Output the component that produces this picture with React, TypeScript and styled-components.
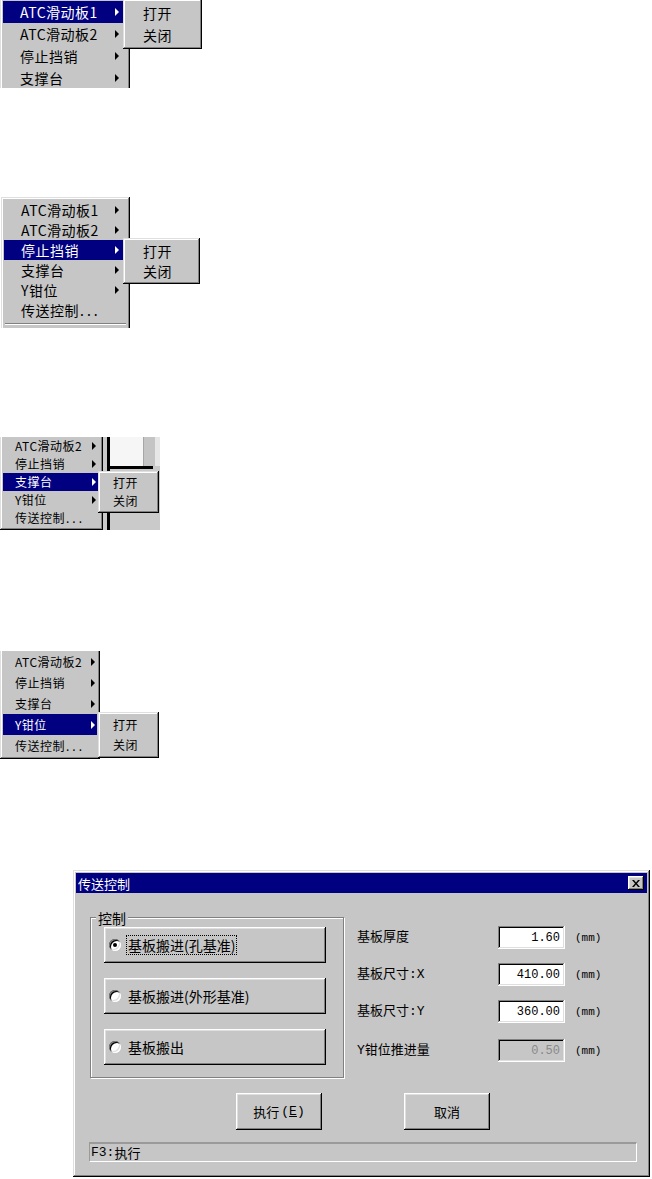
import React from 'react';
import styled, { createGlobalStyle, css } from 'styled-components';

const FACE = '#c6c6c6';
const NAVY = '#000080';

const GlobalStyle = createGlobalStyle`
  html, body {
    margin: 0;
    padding: 0;
    background: #fff;
  }
  body {
    font-family: "Noto Sans CJK SC", sans-serif;
    color: #000;
  }
  * {
    box-sizing: border-box;
  }
`;

const raised = css`
  box-shadow: inset -1px -1px #000, inset 1px 1px #dfdfdf, inset -2px -2px #808080,
    inset 2px 2px #fff;
`;

const buttonEdge = css`
  box-shadow: inset -1px -1px #000, inset 1px 1px #fff, inset -2px -2px #808080,
    inset 2px 2px #dfdfdf;
`;

const sunken = css`
  box-shadow: inset -1px -1px #fff, inset 1px 1px #808080, inset -2px -2px #dfdfdf,
    inset 2px 2px #000;
`;

type Look = { row: number; size: number; indent: number; arrowPad: number };
type Entry = { label: string; arrow?: boolean; dots?: boolean };

const MAIN_ENTRIES: Entry[] = [
  { label: 'ATC滑动板1', arrow: true },
  { label: 'ATC滑动板2', arrow: true },
  { label: '停止挡销', arrow: true },
  { label: '支撑台', arrow: true },
  { label: 'Y钳位', arrow: true },
  { label: '传送控制', dots: true },
];

const SUB_ENTRIES: Entry[] = [{ label: '打开' }, { label: '关闭' }];

const Page = styled.div`
  display: flex;
  flex-direction: column;
  min-height: 1179px;
`;

// a screenshot crop: anything past its edges is simply not shown
const Scene = styled.div<{ $top: number; $height: number }>`
  position: relative;
  display: flex;
  align-items: flex-start;
  margin-top: ${(p) => p.$top}px;
  height: ${(p) => p.$height}px;
  overflow: hidden;
`;

const MenuBox = styled.div<{ $width: number; $offset: number; $left: number; $padTop: number; $padBottom: number }>`
  flex: none;
  width: ${(p) => p.$width}px;
  margin-top: ${(p) => p.$offset}px;
  margin-left: ${(p) => p.$left}px;
  padding: ${(p) => p.$padTop}px 3px ${(p) => p.$padBottom}px;
  background: ${FACE};
  ${raised}
`;

const SubMenuBox = styled.div<{ $width: number; $x: number; $y: number }>`
  position: absolute;
  left: ${(p) => p.$x}px;
  top: ${(p) => p.$y}px;
  width: ${(p) => p.$width}px;
  padding: 3px;
  background: ${FACE};
  ${raised}
`;

const Item = styled.div<{ $look: Look; $active?: boolean }>`
  display: flex;
  align-items: center;
  height: ${(p) => p.$look.row}px;
  padding-left: ${(p) => p.$look.indent}px;
  padding-right: ${(p) => p.$look.arrowPad}px;
  font-size: ${(p) => p.$look.size}px;
  line-height: 1;
  white-space: nowrap;
  letter-spacing: 0.5px;
  color: ${(p) => (p.$active ? '#fff' : '#000')};
  background: ${(p) => (p.$active ? NAVY : 'transparent')};
`;

const Arrow = styled.span`
  flex: none;
  margin-left: auto;
  width: 0;
  height: 0;
  border-top: 4px solid transparent;
  border-bottom: 4px solid transparent;
  border-left: 4px solid currentColor;
`;

const Dots = styled.span`
  letter-spacing: 3px;
  margin-left: 1px;
`;

const Separator = styled.div`
  height: 2px;
  margin: 3px 1px;
  border-top: 1px solid #808080;
  border-bottom: 1px solid #fff;
`;

const Backdrop = styled.div`
  flex: none;
  width: 57px;
  height: 100%;
  display: flex;
  padding-left: 4px;
  background: #cacaca;
`;

const VRule = styled.div`
  flex: none;
  width: 3px;
  background: #000;
`;

const BackdropColumn = styled.div`
  flex: 1;
  display: flex;
  flex-direction: column;
`;

const BackdropTop = styled.div`
  display: flex;
  height: 29px;
  background: #e6e6e6;
`;

const WhitePane = styled.div`
  width: 33px;
  background: #f6f6f6;
`;

const GreyBar = styled.div`
  width: 12px;
  background: #c4c4c4;
  border-left: 1px solid #a6a6a6;
`;

const HRule = styled.div`
  width: 43px;
  height: 3px;
  background: #000;
`;

const Dialog = styled.div`
  display: flex;
  flex-direction: column;
  width: 577px;
  height: 307px;
  margin: 110px 0 0 73px;
  padding: 3px;
  background: ${FACE};
  ${raised}
`;

const TitleBar = styled.div`
  display: flex;
  align-items: center;
  justify-content: space-between;
  height: 20px;
  padding: 0 3px 0 2px;
  background: ${NAVY};
  color: #fff;
  font-size: 13px;
  line-height: 1;
`;

const CloseButton = styled.div`
  display: flex;
  align-items: center;
  justify-content: center;
  width: 16px;
  height: 14px;
  background: ${FACE};
  ${buttonEdge}
`;

const Body = styled.div`
  display: flex;
  flex-direction: column;
  flex: 1;
`;

const TopRow = styled.div`
  display: flex;
  align-items: flex-start;
  margin-top: 24px;
  padding-left: 14px;
`;

const GroupBox = styled.div`
  position: relative;
  display: flex;
  flex-direction: column;
  gap: 15px;
  width: 254px;
  height: 161px;
  padding: 9px 0 0 13px;
  border: 1px solid #808080;
  box-shadow: inset 1px 1px #fff, 1px 1px #fff;
`;

const Legend = styled.span`
  position: absolute;
  top: -8px;
  left: 5px;
  padding: 0 2px;
  background: ${FACE};
  font-size: 14px;
  line-height: 16px;
`;

const OptionButton = styled.div`
  display: flex;
  align-items: center;
  gap: 6px;
  width: 222px;
  height: 36px;
  padding-left: 5px;
  background: ${FACE};
  font-size: 14px;
  line-height: 1;
  ${buttonEdge}
`;

const RadioDot = styled.span<{ $on?: boolean }>`
  flex: none;
  display: flex;
  align-items: center;
  justify-content: center;
  width: 12px;
  height: 12px;
  border-radius: 50%;
  background: #fff;
  box-shadow: inset 1px 1px #808080, inset -1px -1px #fff, inset 2px 2px #000,
    inset -2px -2px #dfdfdf;

  &::after {
    content: '';
    display: ${(p) => (p.$on ? 'block' : 'none')};
    width: 4px;
    height: 4px;
    border-radius: 50%;
    background: #000;
  }
`;

const OptionLabel = styled.span<{ $focus?: boolean }>`
  padding: 2px 1px;
  outline: ${(p) => (p.$focus ? '1px dotted #000' : 'none')};
`;

const Fields = styled.div`
  display: flex;
  flex-direction: column;
  margin-left: 13px;
  padding-top: 9px;
`;

const FieldRow = styled.div<{ $gap: number }>`
  display: flex;
  align-items: center;
  height: 23px;
  margin-top: ${(p) => p.$gap}px;
`;

const FieldLabel = styled.span`
  width: 141px;
  font-family: "Liberation Mono", "Noto Sans CJK SC", monospace;
  font-size: 13px;
  line-height: 1;
`;

const ValueBox = styled.div<{ $disabled?: boolean }>`
  display: flex;
  align-items: center;
  justify-content: flex-end;
  width: 67px;
  height: 23px;
  padding-right: 5px;
  background: ${(p) => (p.$disabled ? FACE : '#fff')};
  color: ${(p) => (p.$disabled ? '#8a8a8a' : '#000')};
  font-family: "Liberation Mono", monospace;
  font-size: 12px;
  ${sunken}
`;

const Unit = styled.span`
  margin-left: 10px;
  font-family: "Liberation Mono", monospace;
  font-size: 11px;
`;

const ButtonRow = styled.div`
  display: flex;
  gap: 82px;
  margin-top: 15px;
  padding-left: 160px;
`;

const PushButton = styled.div`
  display: flex;
  align-items: center;
  justify-content: center;
  width: 86px;
  height: 37px;
  background: ${FACE};
  font-size: 13px;
  line-height: 1;
  ${buttonEdge}
`;

const Mnemonic = styled.span`
  margin-left: 2px;
  font-family: "Liberation Mono", monospace;

  u {
    text-decoration: underline;
  }
`;

const StatusBar = styled.div`
  display: flex;
  align-items: center;
  width: 548px;
  height: 20px;
  margin: 12px 0 0 13px;
  padding-left: 1px;
  border-top: 2px solid #9a9a9a;
  border-left: 1px solid #9a9a9a;
  border-right: 1px solid #fff;
  border-bottom: 1px solid #fff;
  font-size: 13px;
  line-height: 1;
`;

const StatusKey = styled.span`
  font-family: "Liberation Mono", monospace;
`;

const LARGE: Look = { row: 22, size: 14, indent: 17, arrowPad: 8 };
const MEDIUM: Look = { row: 20, size: 14, indent: 17, arrowPad: 8 };
const SMALL: Look = { row: 18, size: 12, indent: 12, arrowPad: 4 };
const TINY: Look = { row: 21, size: 12, indent: 12, arrowPad: 2 };

function Rows({ entries, active, look }: { entries: Entry[]; active?: number; look: Look }) {
  return (
    <>
      {entries.map((e, i) => (
        <Item key={e.label} $look={look} $active={i === active}>
          {e.label}
          {e.dots && <Dots>...</Dots>}
          {e.arrow && <Arrow />}
        </Item>
      ))}
    </>
  );
}

type MenuProps = {
  width: number;
  look: Look;
  active: number;
  from?: number;
  to?: number;
  offset?: number;
  left?: number;
  padTop?: number;
  padBottom?: number;
  separator?: boolean;
};

function MainMenu({
  width,
  look,
  active,
  from = 0,
  to = MAIN_ENTRIES.length,
  offset = 0,
  left = 0,
  padTop = 3,
  padBottom = 3,
  separator,
}: MenuProps) {
  return (
    <MenuBox $width={width} $offset={offset} $left={left} $padTop={padTop} $padBottom={padBottom}>
      <Rows entries={MAIN_ENTRIES.slice(from, to)} active={active - from} look={look} />
      {separator && <Separator />}
    </MenuBox>
  );
}

function SubMenu({ x, y, width, look }: { x: number; y: number; width: number; look: Look }) {
  return (
    <SubMenuBox $x={x} $y={y} $width={width}>
      <Rows entries={SUB_ENTRIES} look={look} />
    </SubMenuBox>
  );
}

const CloseGlyph = () => (
  <svg width="8" height="7" viewBox="0 0 8 7">
    <path d="M0 0h2l2 2.4L6 0h2L5 3.5 8 7H6L4 4.6 2 7H0l3-3.5z" fill="#000" />
  </svg>
);

const App = () => {
  return (
    <Page>
      <GlobalStyle />

      <Scene $top={0} $height={88}>
        <MainMenu width={130} look={LARGE} active={0} to={4} offset={-2} padBottom={12} />
        <SubMenu x={123} y={-1} width={79} look={LARGE} />
      </Scene>

      <Scene $top={107} $height={133}>
        <MainMenu width={129} look={MEDIUM} active={2} offset={2} left={1} padBottom={12} separator />
        <SubMenu x={123} y={43} width={77} look={MEDIUM} />
      </Scene>

      <Scene $top={109} $height={93}>
        <MainMenu width={103} look={SMALL} active={3} from={1} offset={-10} padTop={10} />
        <Backdrop>
          <VRule />
          <BackdropColumn>
            <BackdropTop>
              <WhitePane />
              <GreyBar />
            </BackdropTop>
            <HRule />
          </BackdropColumn>
        </Backdrop>
        <SubMenu x={98} y={34} width={61} look={SMALL} />
      </Scene>

      <Scene $top={121} $height={109}>
        <MainMenu width={100} look={TINY} active={4} from={1} offset={-10} padTop={10} />
        <SubMenu x={98} y={61} width={61} look={{ ...TINY, row: 20 }} />
      </Scene>

      <Dialog>
        <TitleBar>
          <span>传送控制</span>
          <CloseButton>
            <CloseGlyph />
          </CloseButton>
        </TitleBar>
        <Body>
          <TopRow>
            <GroupBox>
              <Legend>控制</Legend>
              <OptionButton>
                <RadioDot $on />
                <OptionLabel $focus>基板搬进(孔基准)</OptionLabel>
              </OptionButton>
              <OptionButton>
                <RadioDot />
                <OptionLabel>基板搬进(外形基准)</OptionLabel>
              </OptionButton>
              <OptionButton>
                <RadioDot />
                <OptionLabel>基板搬出</OptionLabel>
              </OptionButton>
            </GroupBox>
            <Fields>
              <FieldRow $gap={0}>
                <FieldLabel>基板厚度</FieldLabel>
                <ValueBox>1.60</ValueBox>
                <Unit>(mm)</Unit>
              </FieldRow>
              <FieldRow $gap={14}>
                <FieldLabel>基板尺寸:X</FieldLabel>
                <ValueBox>410.00</ValueBox>
                <Unit>(mm)</Unit>
              </FieldRow>
              <FieldRow $gap={14}>
                <FieldLabel>基板尺寸:Y</FieldLabel>
                <ValueBox>360.00</ValueBox>
                <Unit>(mm)</Unit>
              </FieldRow>
              <FieldRow $gap={16}>
                <FieldLabel>Y钳位推进量</FieldLabel>
                <ValueBox $disabled>0.50</ValueBox>
                <Unit>(mm)</Unit>
              </FieldRow>
            </Fields>
          </TopRow>
          <ButtonRow>
            <PushButton>
              执行
              <Mnemonic>
                (<u>E</u>)
              </Mnemonic>
            </PushButton>
            <PushButton>取消</PushButton>
          </ButtonRow>
          <StatusBar>
            <StatusKey>F3:</StatusKey>执行
          </StatusBar>
        </Body>
      </Dialog>
    </Page>
  );
};

export default App;
